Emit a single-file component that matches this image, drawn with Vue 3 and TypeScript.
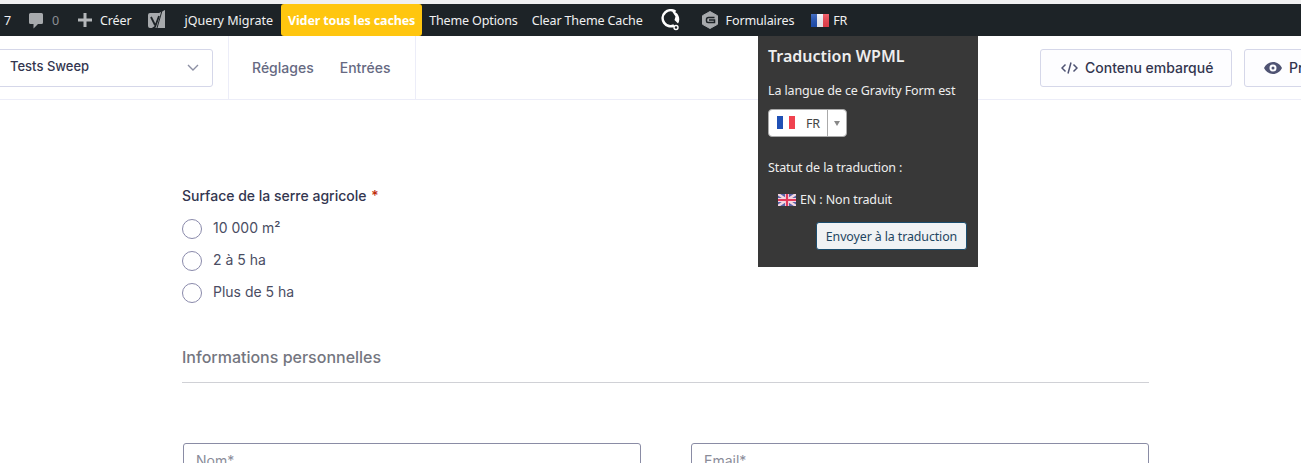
<script setup lang="ts">
const options: string[] = ['10 000 m²', '2 à 5 ha', 'Plus de 5 ha']
</script>

<template>
  <div class="page">
    <div class="top-strip"></div>
    <header class="adminbar">
      <span class="ab-item count">7</span>
      <span class="ab-item comments">
        <svg width="16" height="17" viewBox="0 0 16 17"><path d="M2.500 1h11A1.500 1.500 0 0 1 15 2.500v8a1.500 1.500 0 0 1-1.500 1.500H10l-4.500 4.500V12h-3A1.500 1.500 0 0 1 1 10.500v-8A1.500 1.500 0 0 1 2.500 1z" fill="#a7aaad" /></svg>
        <span class="muted">0</span>
      </span>
      <span class="ab-item create">
        <svg width="14" height="14" viewBox="0 0 14 14"><path d="M5.500 0h3v5.500H14v3H8.500V14h-3V8.500H0v-3h5.500z" fill="#b4b7ba" /></svg>
        Créer
      </span>
      <span class="ab-item yoast">
        <svg width="18" height="22" viewBox="0 0 18 22">
          <path d="M3 4h9l6-3v18H3a2 2 0 0 1-2-2V6a2 2 0 0 1 2-2z" fill="#a7aaad" />
          <path d="M4 8l4 8M12 7l-4 11-3 2" fill="none" stroke="#1d2327" stroke-width="1.800" />
          <path d="M15.500 0L10 19" fill="none" stroke="#1d2327" stroke-width="1" />
        </svg>
      </span>
      <span class="ab-item jq">jQuery Migrate</span>
      <span class="ab-item cache">Vider tous les caches</span>
      <span class="ab-item theme">Theme Options</span>
      <span class="ab-item clear">Clear Theme Cache</span>
      <span class="ab-item ring">
        <svg width="20" height="22" viewBox="0 0 20 22">
          <path d="M13 16.500A8 8 0 1 1 14.500 2.800" fill="none" stroke="#fff" stroke-width="2.600" />
          <path d="M11 2.200a8 8 0 0 1 6 12.300l-3.500-3.500 1-3.500z" fill="#fff" />
          <circle cx="15" cy="18.500" r="2" fill="none" stroke="#fff" stroke-width="1.400" />
        </svg>
      </span>
      <span class="ab-item forms">
        <svg width="16" height="18" viewBox="0 0 16 18">
          <path d="M8 .5l7.500 4.200v8.600L8 17.500.5 13.300V4.700z" fill="#a7aaad" stroke="#a7aaad" stroke-linejoin="round" />
          <path d="M12.500 6.500H6.500a2 2 0 0 0-2 2v1.500a1.500 1.500 0 0 0 1.500 1.500h6.500V9H7" fill="none" stroke="#1d2327" stroke-width="1.500" />
        </svg>
        Formulaires
      </span>
      <span class="ab-item lang">
        <svg width="18" height="13" viewBox="0 0 18 13">
          <defs>
            <linearGradient id="flag-shade" x1="0" y1="0" x2="0" y2="1">
              <stop offset="0" stop-color="#fff" stop-opacity=".18" />
              <stop offset="1" stop-color="#000" stop-opacity=".08" />
            </linearGradient>
          </defs>
          <rect width="6" height="13" fill="#1f50b5" /><rect x="6" width="6" height="13" fill="#f4f4fa" /><rect x="12" width="6" height="13" fill="#f0424f" />
          <rect width="18" height="13" fill="url(#flag-shade)" />
        </svg>
        FR
      </span>
    </header>

    <section class="toolbar">
      <div class="form-select">
        <span>Tests Sweep</span>
        <svg width="12" height="7" viewBox="0 0 12 7"><path d="M1 1l5 5 5-5" fill="none" stroke="#8c8fa3" stroke-width="1.400" /></svg>
      </div>
      <nav class="tabs">
        <span>Réglages</span>
        <span>Entrées</span>
      </nav>
      <div class="actions">
        <button class="tool-btn embed" type="button">
          <svg width="17" height="12" viewBox="0 0 17 12"><path d="M4.500 2.500L1 6l3.500 3.500M12.500 2.500L16 6l-3.500 3.500M10 .5L7 11.500" fill="none" stroke="#4f5373" stroke-width="1.500" /></svg>
          Contenu embarqué
        </button>
        <button class="tool-btn preview" type="button">
          <svg width="18" height="12" viewBox="0 0 18 12"><path fill-rule="evenodd" d="M9 0c4 0 7.300 2.500 9 6-1.700 3.500-5 6-9 6s-7.300-2.500-9-6c1.700-3.500 5-6 9-6zm0 2.500a3.500 3.500 0 1 0 0 7 3.500 3.500 0 0 0 0-7zM9 4.500a1.500 1.500 0 1 1 0 3 1.500 1.500 0 0 1 0-3z" fill="#4f5373" /></svg>
          Prévisualiser
        </button>
      </div>
    </section>

    <main class="form-area">
      <fieldset class="field">
        <div class="legend">Surface de la serre agricole <span class="req">*</span></div>
        <label v-for="option in options" :key="option" class="radio-row">
          <span class="radio"></span>
          <span class="radio-text">{{ option }}</span>
        </label>
      </fieldset>
      <h2 class="section-title">Informations personnelles</h2>
      <div class="inputs">
        <div class="input">Nom*</div>
        <div class="input">Email*</div>
      </div>
    </main>

    <aside class="wpml">
      <h3>Traduction WPML</h3>
      <p class="lang-line">La langue de ce Gravity Form est</p>
      <div class="lang-select">
        <span class="lang-main">
          <svg width="18" height="13" viewBox="0 0 18 13">
            <rect width="6" height="13" fill="#1f50b5" /><rect x="6" width="6" height="13" fill="#fff" /><rect x="12" width="6" height="13" fill="#f0424f" />
          </svg>
          FR
        </span>
        <span class="lang-arrow"></span>
      </div>
      <p class="status">Statut de la traduction :</p>
      <p class="en-line">
        <svg width="18" height="12" viewBox="0 0 18 12">
          <rect width="18" height="12" fill="#5a63a8" />
          <path d="M0 0l18 12M18 0L0 12" stroke="#f3d6e0" stroke-width="2.400" />
          <path d="M9 0v12M0 6h18" stroke="#f3d6e0" stroke-width="4" />
          <path d="M9 0v12M0 6h18" stroke="#e0395a" stroke-width="2.200" />
        </svg>
        EN : Non traduit
      </p>
      <div class="send-row"><button class="send" type="button">Envoyer à la traduction</button></div>
    </aside>
  </div>
</template>

<style scoped>
.page {
  position: relative;
  width: 1301px;
  height: 463px;
  overflow: hidden;
  background: #fff;
  font-family: Inter, "Liberation Sans", sans-serif;
}
.top-strip {
  height: 4px;
  background: #f0f0f1;
}
.adminbar {
  display: flex;
  align-items: center;
  height: 32px;
  background: #1d2327;
  color: #f0f0f1;
  font-family: "Noto Sans", sans-serif;
  font-size: 12.550px;
  letter-spacing: -0.150px;
  white-space: nowrap;
}
.ab-item {
  display: flex;
  align-items: center;
  flex: none;
}
.count { margin-left: 4px; }
.comments { margin-left: 17px; gap: 8px; }
.muted { color: #8c8f94; }
.create { margin-left: 19px; gap: 8px; }
.yoast { margin-left: 15px; }
.jq { margin-left: 20px; letter-spacing: 0; }
.cache {
  margin-left: 8px;
  height: 32px;
  width: 141px;
  justify-content: center;
  background: #ffc60f;
  border-radius: 3px;
  color: #fff;
  font-weight: 700;
}
.theme { margin-left: 7px; }
.clear { margin-left: 14px; }
.ring { margin-left: 18px; }
.forms { margin-left: 21px; gap: 8px; }
.lang { margin-left: 17px; gap: 4px; }
.toolbar {
  display: flex;
  align-items: center;
  height: 63px;
  border-bottom: 1px solid #ecedf8;
}
.form-select {
  box-sizing: border-box;
  display: flex;
  align-items: center;
  justify-content: space-between;
  width: 223px;
  height: 38px;
  margin-left: -10px;
  padding: 0 13px 0 19px;
  border: 1px solid #d5d7e9;
  border-radius: 3px;
  font-size: 13px;
  font-weight: 500;
  line-height: 16px;
  color: #33364f;
}
.form-select > span { margin-top: -3px; }
.tabs {
  display: flex;
  align-items: center;
  gap: 26px;
  height: 63px;
  margin-left: 15px;
  padding: 0 24px 0 23px;
  border-left: 1px solid #ecedf8;
  border-right: 1px solid #ecedf8;
  color: #666982;
  font-size: 14px;
  font-weight: 500;
}
.tabs span:last-child { margin-right: 1px; }
.actions {
  display: flex;
  gap: 12px;
  margin-left: auto;
  margin-right: -113px;
}
.tool-btn {
  display: flex;
  align-items: center;
  box-sizing: border-box;
  height: 38px;
  padding: 0;
  border: 1px solid #d5d7e9;
  border-radius: 3px;
  background: #fdfdff;
  color: #33364f;
  font-family: inherit;
  font-size: 14px;
  font-weight: 500;
}
.embed { width: 192px; gap: 7px; padding-left: 20px; }
.preview { width: 170px; gap: 7px; padding-left: 19px; }
.form-area {
  padding: 86px 152px 0 182px;
}
.field {
  margin: 0;
  padding: 0;
  border: 0;
}
.legend {
  height: 20px;
  font-size: 14px;
  font-weight: 500;
  line-height: 20px;
  color: #33364f;
}
.req {
  margin-left: 1px;
  color: #c02b0a;
}
.radio-row {
  display: flex;
  align-items: center;
  gap: 11px;
  height: 32px;
  font-size: 14px;
  color: #4a4d63;
}
.radio-row:first-of-type { margin-top: 7px; }
.radio-text { margin-top: -4px; }
.radio {
  box-sizing: border-box;
  width: 20px;
  height: 20px;
  border: 1px solid #8a8aab;
  border-radius: 50%;
}
.section-title {
  box-sizing: border-box;
  height: 36px;
  margin: 38px 0 0;
  border-bottom: 1px solid #d0d1d6;
  font-size: 16px;
  line-height: 20px;
  font-weight: 500;
  color: #74767f;
}
.inputs {
  display: grid;
  grid-template-columns: 458px 458px;
  gap: 50px;
  margin-top: 60px;
  margin-left: 1px;
}
.input {
  box-sizing: border-box;
  height: 48px;
  padding: 8px 12px;
  border: 1px solid #8a8ca5;
  border-radius: 3px;
  font-size: 14px;
  line-height: 18px;
  color: #8a8c99;
}
.wpml {
  position: absolute;
  left: 758px;
  top: 36px;
  box-sizing: border-box;
  width: 220px;
  height: 231px;
  padding: 10px 11px 10px 10px;
  background: #383838;
  color: #eee;
  font-family: "Noto Sans", sans-serif;
  font-size: 12.500px;
  letter-spacing: -0.120px;
}
.wpml h3 {
  margin: 0;
  font-size: 16px;
  line-height: 20px;
  font-weight: 600;
  letter-spacing: 0;
}
.wpml p { margin: 0; line-height: 18px; }
.lang-line { margin-top: 16px !important; }
.lang-select {
  box-sizing: border-box;
  display: flex;
  width: 79px;
  height: 28px;
  margin-top: 9px;
  border: 1px solid #aaa;
  border-radius: 4px;
  background: #fff;
  color: #444;
}
.lang-main {
  display: flex;
  align-items: center;
  gap: 11px;
  width: 59px;
  padding-left: 8px;
  box-sizing: border-box;
  border-right: 1px solid #aaa;
}
.lang-main svg { margin-top: -1px; }
.lang-arrow {
  width: 0;
  height: 0;
  margin: 11px 0 0 6px;
  border-left: 3px solid transparent;
  border-right: 3px solid transparent;
  border-top: 5px solid #888;
}
.status { margin-top: 22px !important; }
.en-line {
  display: flex;
  align-items: center;
  gap: 4px;
  margin: 14px 0 0 10px !important;
}
.send-row {
  display: flex;
  justify-content: flex-end;
  margin-top: 13px;
}
.send {
  box-sizing: border-box;
  width: 151px;
  height: 28px;
  padding: 0;
  border: 1px solid #1b4d6e;
  border-radius: 3px;
  background: #f0f2f4;
  color: #1f4661;
  font-family: inherit;
  font-size: 12.400px;
  letter-spacing: -0.100px;
}
</style>
